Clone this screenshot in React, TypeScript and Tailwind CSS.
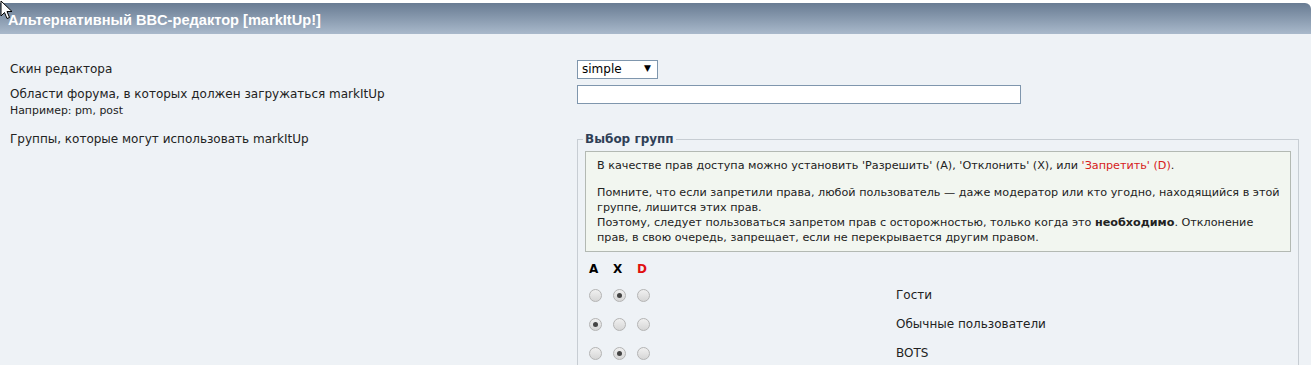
import React from 'react';

type Perm = 'A' | 'X' | 'D';

const groups: { name: string; value: Perm }[] = [
  { name: 'Гости', value: 'X' },
  { name: 'Обычные пользователи', value: 'A' },
  { name: 'BOTS', value: 'X' },
];

const Radio: React.FC<{ checked: boolean }> = ({ checked }) => (
  <span className="flex h-[13px] w-[13px] items-center justify-center rounded-full border border-[#b4b4b4] bg-gradient-to-b from-[#f0f0f0] to-[#d6d6d6]">
    {checked && <span className="h-[5px] w-[5px] rounded-full bg-[#444]" />}
  </span>
);

const Cursor: React.FC = () => (
  <svg className="absolute left-0 top-0" width="14" height="20" viewBox="0 0 14 20">
    <path d="M1 1 L1 16 L4.5 12.5 L7 18.5 L9.5 17.5 L7 11.5 L12 11.5 Z" fill="#fff" stroke="#000" strokeWidth="1" />
  </svg>
);

export default function App() {
  return (
    <div className="relative min-h-[365px] bg-white pt-[3px] font-['DejaVu_Sans',Verdana,sans-serif] text-[#222]">
      <Cursor />
      <div className="w-[1311px]">
        <div className="flex h-[31px] items-center rounded-tr-[6px] bg-gradient-to-b from-[#697c93] to-[#a9b9cb] px-[8px] pt-[5px] font-['Liberation_Sans',Arial,sans-serif] text-[14.6px] font-bold text-white">
          Альтернативный BBC-редактор [markItUp!]
        </div>
        <div className="h-[331px] bg-[#eef2f6] pt-[25px] text-[12px]">
          <div className="flex h-[20px] items-center">
            <div className="w-[577px] pl-[10px]">Скин редактора</div>
            <div className="flex h-[19px] w-[81px] items-center justify-between border border-[#7f96ad] bg-white pl-[4px] pr-[6px] text-[12px] text-black">
              <span>simple</span>
              <span className="text-[9px]">▼</span>
            </div>
          </div>
          <div className="mt-[7px] flex">
            <div className="w-[577px] pl-[10px]">
              <div className="leading-[17px]">Области форума, в которых должен загружаться markItUp</div>
              <div className="text-[10.9px] leading-[16px]">Например: pm, post</div>
            </div>
            <div className="mt-[-1px] h-[19px] w-[444px] border border-[#7f96ad] bg-white" />
          </div>
          <div className="mt-[12px] flex">
            <div className="w-[577px] pl-[10px] leading-[16px]">Группы, которые могут использовать markItUp</div>
            <fieldset className="w-[722px] border border-[#c7cdd3] px-[7px] pb-[12px]">
              <legend className="ml-[-2px] px-[2px] text-[12px] font-bold leading-[16px] text-[#2f3f56]">Выбор групп</legend>
              <div className="mt-[4px] border border-[#b3b9b3] bg-[#f2f6f0] pl-[11px] pr-[4px] py-[6px] text-[11.2px] leading-[15px]">
                <p>
                  В качестве прав доступа можно установить 'Разрешить' (A), 'Отклонить' (X), или{' '}
                  <span className="text-[#d62020]">'Запретить' (D)</span>.
                </p>
                <p className="mt-[12px]">
                  Помните, что если запретили права, любой пользователь — даже модератор или кто угодно, находящийся в этой группе, лишится этих прав.
                  <br />
                  Поэтому, следует пользоваться запретом прав с осторожностью, только когда это <b>необходимо</b>. Отклонение прав, в свою очередь, запрещает, если не перекрывается другим правом.
                </p>
              </div>
              <div className="mt-[9px] flex h-[16px] items-center pl-[4px] text-[12px] font-bold">
                <span className="w-[24px] text-black">A</span>
                <span className="w-[24px] text-black">X</span>
                <span className="text-[#e01010]">D</span>
              </div>
              <div className="mt-[10px] flex flex-col gap-[13px]">
                {groups.map((g) => (
                  <div key={g.name} className="flex h-[16px] items-center">
                    <div className="flex w-[311px] gap-[11px] pl-[4px]">
                      <Radio checked={g.value === 'A'} />
                      <Radio checked={g.value === 'X'} />
                      <Radio checked={g.value === 'D'} />
                    </div>
                    <span>{g.name}</span>
                  </div>
                ))}
              </div>
            </fieldset>
          </div>
        </div>
      </div>
    </div>
  );
}
